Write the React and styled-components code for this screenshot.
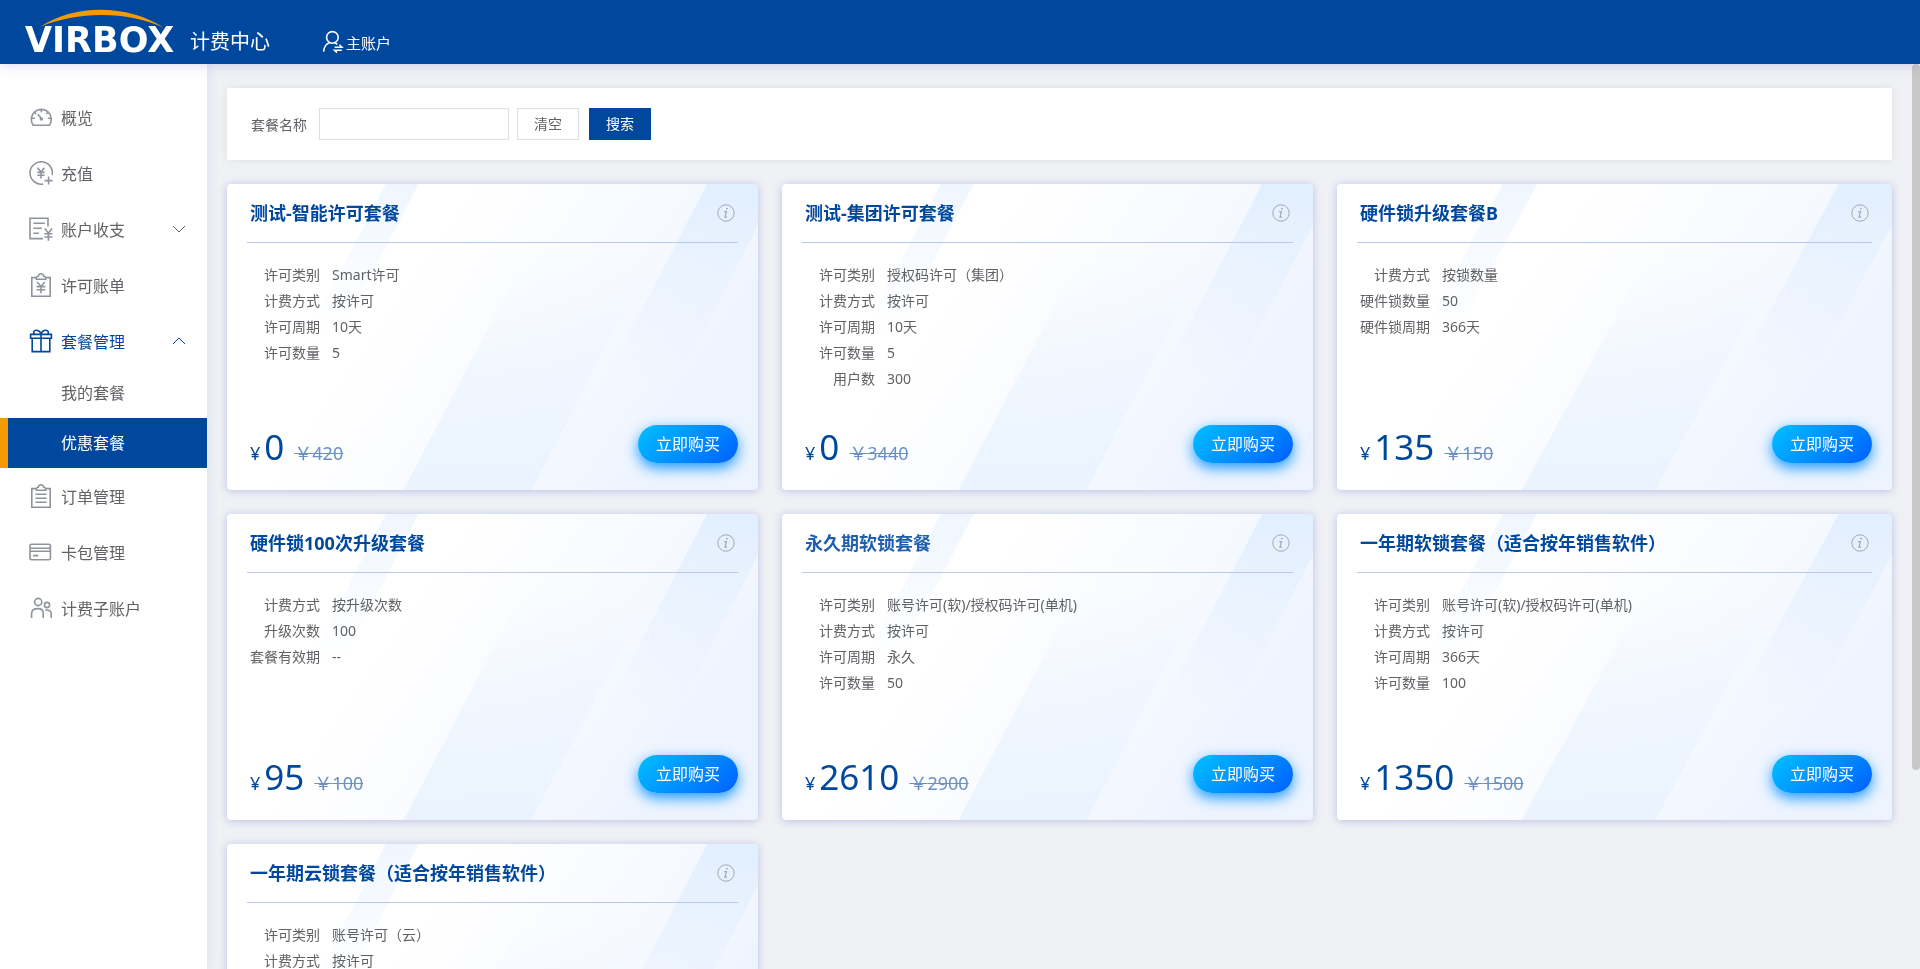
import React, { useId } from 'react';
import styled, { createGlobalStyle } from 'styled-components';

const BLUE = '#00489d';

const GlobalStyle = createGlobalStyle`
  * {
    box-sizing: border-box;
  }
  body {
    margin: 0;
    overflow: hidden;
    color: #606266;
    background: #f0f1f5;
  }
  body, button, input {
    font-family: 'Noto Sans', 'Noto Sans CJK SC', sans-serif;
    font-size: 14px;
  }
`;

const packages = [
  {
    title: '测试-智能许可套餐',
    details: [['许可类别', 'Smart许可'], ['计费方式', '按许可'], ['许可周期', '10天'], ['许可数量', '5']],
    price: 0,
    original: 420,
  },
  {
    title: '测试-集团许可套餐',
    details: [['许可类别', '授权码许可（集团）'], ['计费方式', '按许可'], ['许可周期', '10天'], ['许可数量', '5'], ['用户数', '300']],
    price: 0,
    original: 3440,
  },
  {
    title: '硬件锁升级套餐B',
    details: [['计费方式', '按锁数量'], ['硬件锁数量', '50'], ['硬件锁周期', '366天']],
    price: 135,
    original: 150,
  },
  {
    title: '硬件锁100次升级套餐',
    details: [['计费方式', '按升级次数'], ['升级次数', '100'], ['套餐有效期', '--']],
    price: 95,
    original: 100,
  },
  {
    title: '永久期软锁套餐',
    details: [['许可类别', '账号许可(软)/授权码许可(单机)'], ['计费方式', '按许可'], ['许可周期', '永久'], ['许可数量', '50']],
    price: 2610,
    original: 2900,
    light: true,
  },
  {
    title: '一年期软锁套餐（适合按年销售软件）',
    details: [['许可类别', '账号许可(软)/授权码许可(单机)'], ['计费方式', '按许可'], ['许可周期', '366天'], ['许可数量', '100']],
    price: 1350,
    original: 1500,
  },
  {
    title: '一年期云锁套餐（适合按年销售软件）',
    details: [['许可类别', '账号许可（云）'], ['计费方式', '按许可']],
  },
];

/* icons */

const GaugeIcon = () => (
  <Icon viewBox="0 0 24 24">
    <path d="M4.2 20.2A10 10 0 1 1 20.4 20.2Z" />
    <path d="M12.3 4.2v3M2.6 13.2h3.4M18.8 13.2h3.4M5.6 7.4l1.8 1.6M19 7.4l-1.8 1.6M8.8 9.4l3.2 3.6" />
    <circle cx="12.4" cy="14" r="1" />
  </Icon>
);

const RechargeIcon = () => (
  <Icon viewBox="0 0 24 24">
    <path d="M23.2 14.2A11.2 11.2 0 1 0 14.2 23" />
    <path d="M8.6 6.8l3.4 4.2 3.4-4.2M12 11v6.4M8.4 11.4h7.2M8.4 14.2h7.2M19.6 15.6v8M15.6 19.6h8" />
  </Icon>
);

const AccountIcon = () => (
  <Icon viewBox="0 0 24 24">
    <path d="M19 9.6V1.2H1v20.4h13" />
    <path d="M4.4 6.2h11.4M4.4 11.2h8.4M4.4 16.2h5.6" />
    <path d="M15.8 11.6l3.6 4.6 3.6-4.6M19.4 16.2v7.6M15.4 16.8h8M15.4 20h8" />
  </Icon>
);

const ClipboardTop = () => (
  <>
    <path d="M7.4 4.6H2.8v18.6h18.4V4.6h-4.6" />
    <path d="M7.4 6.2V4.6c0-1 .8-1.2 1.8-1.3C9.6 1.8 10.7.8 12 .8s2.4 1 2.8 2.5c1 .1 1.8.3 1.8 1.3v1.6z" />
  </>
);

const BillIcon = () => (
  <Icon viewBox="0 0 24 24">
    <ClipboardTop />
    <path d="M8.2 9l3.8 4.4L15.8 9M12 13.4v6.8M7.6 13.6h8.8M7.6 16.8h8.8" />
  </Icon>
);

const GiftIcon = () => (
  <Icon viewBox="0 0 24 24">
    <path d="M1.6 5.4h20.8v3.8H1.6zM3.2 9.2h17.6v13.4H3.2zM12 5.4v17.2" />
    <path d="M12 4.8C10.4.4 5 .2 4.6 3.4c-.1 1 .6 1.8 1.2 2M12 4.8c1.6-4.4 7-4.6 7.4-1.4.1 1-.6 1.8-1.2 2" />
  </Icon>
);

const OrderIcon = () => (
  <Icon viewBox="0 0 24 24">
    <ClipboardTop />
    <path d="M6.4 10.2h11.2M6.4 14.2h11.2M6.4 18.2h11.2" />
  </Icon>
);

const CardIcon = () => (
  <Icon viewBox="0 0 24 24">
    <rect x="1" y="4.2" width="20.4" height="15.6" rx="1.6" />
    <path d="M1 8.2h20.4M1 11.2h20.4M4 15.6h5.4" />
  </Icon>
);

const UsersIcon = () => (
  <Icon viewBox="0 0 24 24">
    <circle cx="9.2" cy="6" r="3.6" />
    <circle cx="18" cy="9" r="2.6" />
    <path d="M2.6 22v-4.4c0-3 2.2-5 6.4-5 3.2 0 5.2 1.8 5.2 4.4V22M16.2 14.2c3.8-.6 6 1 6 3.6V22" />
  </Icon>
);

const UserSwitchIcon = () => (
  <UserSvg viewBox="0 0 22 24">
    <circle cx="10.4" cy="7.4" r="5.8" />
    <path d="M1.6 21.6c.4-4.6 2.4-7.6 6-8.8M12.4 13c1.4.4 2.2.8 3 1.4" />
    <path d="M12.6 17.2h7.2l-2.4-2.4M19.8 20.2h-7.2l2.4 2.4" />
  </UserSvg>
);

const Chevron = ({ up }) => (
  <ChevronSvg viewBox="0 0 14 8">
    <path d={up ? 'M1 7l6-6 6 6' : 'M1 1l6 6 6-6'} />
  </ChevronSvg>
);

const InfoIcon = () => (
  <svg width="18" height="18" viewBox="0 0 18 18" fill="none" stroke="#a3a8b0" aria-hidden="true">
    <circle cx="9" cy="9" r="8.2" />
    <path d="M7.2 7.6h2.2l-1.4 5.6h2" strokeWidth="1.2" />
    <circle cx="9.9" cy="4.7" r=".9" fill="#a3a8b0" stroke="none" />
  </svg>
);

const Logo = () => (
  <LogoSvg viewBox="0 0 156 64" role="img" aria-label="VIRBOX">
    <path d="M20 27C54 4 108 4 144 28 108 11 58 11 20 27Z" fill="#f59a00" />
    <text x="5" y="52">VIRBOX</text>
  </LogoSvg>
);

const CardBackdrop = () => {
  const id = useId();
  return (
    <Backdrop viewBox="0 0 532 306" preserveAspectRatio="none" aria-hidden="true">
      <defs>
        <linearGradient id={`${id}base`} x1="0" y1="0" x2="1" y2="0.4">
          <stop offset="0.4" stopColor="#fff" />
          <stop offset="0.7" stopColor="#f8faff" />
          <stop offset="1" stopColor="#eef4ff" />
        </linearGradient>
        <linearGradient id={`${id}left`} x1="0" y1="0" x2="0" y2="1">
          <stop offset="0" stopColor="#f0f6ff" />
          <stop offset="1" stopColor="#f0f6ff" stopOpacity="0" />
        </linearGradient>
        <linearGradient id={`${id}mid`} x1="0" y1="1" x2="0" y2="0">
          <stop offset="0" stopColor="#eaf3ff" />
          <stop offset="0.5" stopColor="#edf5ff" stopOpacity="0.7" />
          <stop offset="1" stopColor="#eef5ff" stopOpacity="0" />
        </linearGradient>
        <linearGradient id={`${id}right`} x1="0" y1="0" x2="0" y2="1">
          <stop offset="0" stopColor="#e1efff" />
          <stop offset="1" stopColor="#e6f0ff" stopOpacity="0" />
        </linearGradient>
      </defs>
      <path d="M0 0h532v306H0z" fill={`url(#${id}base)`} />
      <path d="M159 0h33l-78 150H81z" fill={`url(#${id}left)`} />
      <path d="M177 306h128L423 80H295z" fill={`url(#${id}mid)`} />
      <path d="M481 0h51v41l-78 150h-72z" fill={`url(#${id}right)`} />
    </Backdrop>
  );
};

const PackageCard = ({ title, details, price, original, light }) => (
  <Card>
    <CardBackdrop />
    <CardHead>
      <CardTitle $light={light}>{title}</CardTitle>
      <InfoButton type="button" aria-label="套餐说明">
        <InfoIcon />
      </InfoButton>
    </CardHead>
    <Details>
      {details.map(([label, value]) => (
        <React.Fragment key={label}>
          <dt>{label}</dt>
          <dd>{value}</dd>
        </React.Fragment>
      ))}
    </Details>
    <CardFoot>
      {price !== undefined && (
        <PriceLine>
          <Currency>¥</Currency>
          <Price>{price}</Price>
          <Original>￥{original}</Original>
        </PriceLine>
      )}
      <BuyButton type="button">立即购买</BuyButton>
    </CardFoot>
  </Card>
);

const App = () => {
  return (
    <Page>
      <GlobalStyle />
      <Header>
        <Logo />
        <Product>计费中心</Product>
        <Account href="#account">
          <UserSwitchIcon />
          主账户
        </Account>
      </Header>
      <Body>
        <Sidebar>
          <MenuLink href="#overview"><GaugeIcon />概览</MenuLink>
          <MenuLink href="#recharge"><RechargeIcon />充值</MenuLink>
          <MenuLink href="#balance"><AccountIcon />账户收支<Chevron /></MenuLink>
          <MenuLink href="#bills"><BillIcon />许可账单</MenuLink>
          <MenuLink href="#packages" $open><GiftIcon />套餐管理<Chevron up /></MenuLink>
          <SubMenu>
            <SubLink href="#mine">我的套餐</SubLink>
            <SubLink href="#discount" $active>优惠套餐</SubLink>
          </SubMenu>
          <MenuLink href="#orders"><OrderIcon />订单管理</MenuLink>
          <MenuLink href="#cards"><CardIcon />卡包管理</MenuLink>
          <MenuLink href="#sub-accounts"><UsersIcon />计费子账户</MenuLink>
        </Sidebar>
        <Content>
          <Filter>
            <label htmlFor="package-name">套餐名称</label>
            <NameInput id="package-name" type="text" />
            <FilterButton type="button">清空</FilterButton>
            <FilterButton type="submit" $primary>搜索</FilterButton>
          </Filter>
          <CardGrid>
            {packages.map((item) => (
              <PackageCard key={item.title} {...item} />
            ))}
          </CardGrid>
        </Content>
        <ScrollTrack>
          <ScrollThumb />
        </ScrollTrack>
      </Body>
    </Page>
  );
};

const Page = styled.div`
  display: flex;
  flex-direction: column;
  height: 100vh;
`;

const Header = styled.header`
  position: relative;
  z-index: 2;
  display: flex;
  flex: none;
  height: 64px;
  padding-left: 20px;
  color: #fff;
  background: ${BLUE};
  box-shadow: 0 0 12px rgba(80, 60, 220, 0.25);
`;

const LogoSvg = styled.svg`
  width: 156px;
  height: 64px;
  text {
    fill: #fff;
    font-family: 'DejaVu Sans', sans-serif;
    font-size: 35px;
    font-weight: bold;
  }
`;

const Product = styled.span`
  margin: 27px 0 0 14px;
  font-size: 20px;
  line-height: 30px;
`;

const Account = styled.a`
  display: flex;
  align-items: center;
  gap: 2px;
  height: 26px;
  margin: 29px 0 0 52px;
  color: #fff;
  font-size: 15px;
  text-decoration: none;
`;

const UserSvg = styled.svg`
  width: 22px;
  height: 24px;
  fill: none;
  stroke: currentColor;
  stroke-width: 1.6;
`;

const Body = styled.div`
  display: flex;
  flex: 1;
  min-height: 0;
`;

const Sidebar = styled.nav`
  position: relative;
  z-index: 1;
  flex: none;
  width: 207px;
  padding-top: 25px;
  background: #fff;
  box-shadow: 0 0 12px rgba(80, 60, 220, 0.12);
`;

const Icon = styled.svg`
  width: 24px;
  height: 24px;
  margin-right: 8px;
  fill: none;
  stroke: currentColor;
  stroke-width: 1.6;
`;

const ChevronSvg = styled.svg`
  width: 14px;
  height: 8px;
  margin-left: auto;
  fill: none;
  stroke: currentColor;
`;

const MenuLink = styled.a`
  display: flex;
  align-items: center;
  height: 56px;
  padding: 0 21px 0 29px;
  color: ${(props) => (props.$open ? BLUE : '#606266')};
  font-size: 16px;
  text-decoration: none;
  ${Icon} {
    color: ${(props) => (props.$open ? BLUE : '#8f949c')};
  }
`;

const SubMenu = styled.div`
  margin: -1px 0 0;
`;

const SubLink = styled.a`
  display: block;
  height: 50px;
  padding-left: 53px;
  border-left: 8px solid ${(props) => (props.$active ? '#f59a00' : 'transparent')};
  color: ${(props) => (props.$active ? '#fff' : '#606266')};
  background: ${(props) => (props.$active ? BLUE : 'none')};
  font-size: 16px;
  line-height: 50px;
  text-decoration: none;
`;

const Content = styled.main`
  flex: 1;
  padding: 24px 20px 80px;
  overflow-y: scroll;
  scrollbar-width: none;
`;

const ScrollTrack = styled.div`
  flex: none;
  width: 8px;
  height: 100%;
`;

const ScrollThumb = styled.div`
  height: 78%;
  border-radius: 4px;
  background: #c8c8c8;
`;

const Filter = styled.form`
  display: flex;
  align-items: center;
  height: 72px;
  padding: 0 24px;
  background: #fff;
  box-shadow: 0 0 8px rgba(0, 0, 0, 0.08);
`;

const NameInput = styled.input`
  width: 190px;
  height: 32px;
  margin: 0 8px 0 12px;
  padding: 0 10px;
  border: 1px solid #dcdfe6;
  outline: none;
`;

const FilterButton = styled.button`
  width: 62px;
  height: 32px;
  margin-right: 10px;
  padding: 0 0 2px;
  border: 1px solid ${(props) => (props.$primary ? BLUE : '#dcdfe6')};
  color: ${(props) => (props.$primary ? '#fff' : '#606266')};
  background: ${(props) => (props.$primary ? BLUE : '#fff')};
  cursor: pointer;
`;

const Card = styled.article`
  position: relative;
  display: flex;
  flex-direction: column;
  min-height: 306px;
  margin-right: 24px;
  padding: 0 20px 27px;
  border-radius: 4px;
  box-shadow: 0 1px 8px rgba(40, 70, 190, 0.28);
`;

const CardGrid = styled.section`
  display: grid;
  grid-template-columns: repeat(3, 1fr);
  row-gap: 24px;
  margin-top: 24px;
  ${Card}:nth-child(3n) {
    margin-right: 0;
  }
`;

const Backdrop = styled.svg`
  position: absolute;
  inset: 0;
  z-index: -1;
  width: 100%;
  height: 100%;
  border-radius: 4px;
`;

const CardHead = styled.header`
  display: flex;
  align-items: center;
  justify-content: space-between;
  height: 59px;
  padding: 0 3px;
  border-bottom: 1px solid #b8cbe6;
`;

const CardTitle = styled.h2`
  margin: 0;
  padding-bottom: 2px;
  color: ${(props) => (props.$light ? '#1f5fae' : BLUE)};
  font-size: 18px;
  font-weight: bold;
`;

const InfoButton = styled.button`
  display: flex;
  padding: 0;
  border: 0;
  background: none;
  cursor: pointer;
`;

const Details = styled.dl`
  display: grid;
  grid-template-columns: 70px 1fr;
  column-gap: 12px;
  margin: 19px 0 0;
  padding-left: 3px;
  line-height: 26px;
  dt {
    text-align: right;
    white-space: nowrap;
  }
  dd {
    margin: 0;
  }
`;

const CardFoot = styled.footer`
  display: flex;
  align-items: flex-end;
  margin-top: auto;
`;

const PriceLine = styled.div`
  display: flex;
  align-items: baseline;
  padding-left: 3px;
  color: ${BLUE};
  line-height: 20px;
`;

const Currency = styled.span`
  margin-right: 4px;
  font-size: 18px;
`;

const Price = styled.span`
  font-size: 35px;
`;

const Original = styled.del`
  margin-left: 10px;
  color: #6b90c6;
  font-size: 18px;
`;

const BuyButton = styled.button`
  width: 100px;
  height: 38px;
  margin-left: auto;
  padding: 0 0 2px;
  border: 0;
  border-radius: 19px;
  color: #fff;
  background: linear-gradient(135deg, #00c0ff, #0060ff);
  box-shadow: 0 5px 14px #1c9bff;
  font-size: 16px;
  cursor: pointer;
`;

export default App;
